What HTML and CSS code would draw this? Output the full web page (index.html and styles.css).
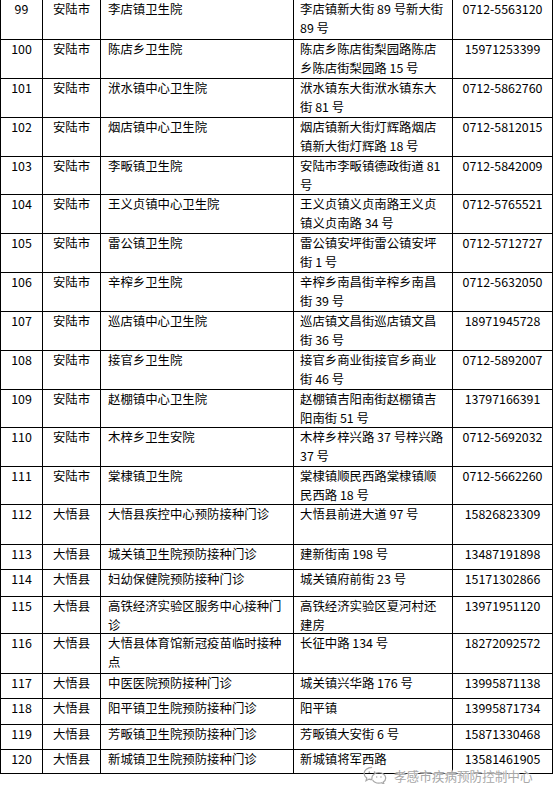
FILE: index.html
```html
<!DOCTYPE html>
<html lang="zh-CN">
<head>
<meta charset="utf-8">
<title>接种点列表</title>
<link rel="stylesheet" href="styles.css">
</head>
<body>
<div class="sheet">
  <div class="row h40"><div class="c num">99</div><div class="c city">安陆市</div><div class="c name">李店镇卫生院</div><div class="c addr">李店镇新大街 89 号新大街<br>89 号</div><div class="c tel">0712-5563120</div></div>
  <div class="row h39"><div class="c num">100</div><div class="c city">安陆市</div><div class="c name">陈店乡卫生院</div><div class="c addr">陈店乡陈店街梨园路陈店<br>乡陈店街梨园路 15 号</div><div class="c tel">15971253399</div></div>
  <div class="row h39"><div class="c num">101</div><div class="c city">安陆市</div><div class="c name">洑水镇中心卫生院</div><div class="c addr">洑水镇东大街洑水镇东大<br>街 81 号</div><div class="c tel">0712-5862760</div></div>
  <div class="row h39"><div class="c num">102</div><div class="c city">安陆市</div><div class="c name">烟店镇中心卫生院</div><div class="c addr">烟店镇新大街灯辉路烟店<br>镇新大街灯辉路 18 号</div><div class="c tel">0712-5812015</div></div>
  <div class="row h38"><div class="c num">103</div><div class="c city">安陆市</div><div class="c name">李畈镇卫生院</div><div class="c addr">安陆市李畈镇德政街道 81<br>号</div><div class="c tel">0712-5842009</div></div>
  <div class="row h39"><div class="c num">104</div><div class="c city">安陆市</div><div class="c name">王义贞镇中心卫生院</div><div class="c addr">王义贞镇义贞南路王义贞<br>镇义贞南路 34 号</div><div class="c tel">0712-5765521</div></div>
  <div class="row h39"><div class="c num">105</div><div class="c city">安陆市</div><div class="c name">雷公镇卫生院</div><div class="c addr">雷公镇安坪街雷公镇安坪<br>街 1 号</div><div class="c tel">0712-5712727</div></div>
  <div class="row h39"><div class="c num">106</div><div class="c city">安陆市</div><div class="c name">辛榨乡卫生院</div><div class="c addr">辛榨乡南昌街辛榨乡南昌<br>街 39 号</div><div class="c tel">0712-5632050</div></div>
  <div class="row h39"><div class="c num">107</div><div class="c city">安陆市</div><div class="c name">巡店镇中心卫生院</div><div class="c addr">巡店镇文昌街巡店镇文昌<br>街 36 号</div><div class="c tel">18971945728</div></div>
  <div class="row h39"><div class="c num">108</div><div class="c city">安陆市</div><div class="c name">接官乡卫生院</div><div class="c addr">接官乡商业街接官乡商业<br>街 46 号</div><div class="c tel">0712-5892007</div></div>
  <div class="row h38"><div class="c num">109</div><div class="c city">安陆市</div><div class="c name">赵棚镇中心卫生院</div><div class="c addr">赵棚镇吉阳南街赵棚镇吉<br>阳南街 51 号</div><div class="c tel">13797166391</div></div>
  <div class="row h39"><div class="c num">110</div><div class="c city">安陆市</div><div class="c name">木梓乡卫生安院</div><div class="c addr">木梓乡梓兴路 37 号梓兴路<br>37 号</div><div class="c tel">0712-5692032</div></div>
  <div class="row h38"><div class="c num">111</div><div class="c city">安陆市</div><div class="c name">棠棣镇卫生院</div><div class="c addr">棠棣镇顺民西路棠棣镇顺<br>民西路 18 号</div><div class="c tel">0712-5662260</div></div>
  <div class="row h40"><div class="c num">112</div><div class="c city">大悟县</div><div class="c name">大悟县疾控中心预防接种门诊</div><div class="c addr">大悟县前进大道 97 号</div><div class="c tel">15826823309</div></div>
  <div class="row h25"><div class="c num">113</div><div class="c city">大悟县</div><div class="c name">城关镇卫生院预防接种门诊</div><div class="c addr">建新街南 198 号</div><div class="c tel">13487191898</div></div>
  <div class="row h27"><div class="c num">114</div><div class="c city">大悟县</div><div class="c name">妇幼保健院预防接种门诊</div><div class="c addr">城关镇府前街 23 号</div><div class="c tel">15171302866</div></div>
  <div class="row h37"><div class="c num">115</div><div class="c city">大悟县</div><div class="c name">高铁经济实验区服务中心接种门<br>诊</div><div class="c addr">高铁经济实验区夏河村还<br>建房</div><div class="c tel">13971951120</div></div>
  <div class="row h40"><div class="c num">116</div><div class="c city">大悟县</div><div class="c name">大悟县体育馆新冠疫苗临时接种<br>点</div><div class="c addr">长征中路 134 号</div><div class="c tel">18272092572</div></div>
  <div class="row h25"><div class="c num">117</div><div class="c city">大悟县</div><div class="c name">中医医院预防接种门诊</div><div class="c addr">城关镇兴华路 176 号</div><div class="c tel">13995871138</div></div>
  <div class="row h26"><div class="c num">118</div><div class="c city">大悟县</div><div class="c name">阳平镇卫生院预防接种门诊</div><div class="c addr">阳平镇</div><div class="c tel">13995871734</div></div>
  <div class="row h25"><div class="c num">119</div><div class="c city">大悟县</div><div class="c name">芳畈镇卫生院预防接种门诊</div><div class="c addr">芳畈镇大安街 6 号</div><div class="c tel">15871330468</div></div>
  <div class="row h24 tight"><div class="c num">120</div><div class="c city">大悟县</div><div class="c name">新城镇卫生院预防接种门诊</div><div class="c addr">新城镇将军西路</div><div class="c tel">13581461905</div></div>
</div>
<div class="watermark">
  <svg class="wm-icon" width="26" height="18" viewBox="0 0 26 19" aria-hidden="true">
    <path d="M10 1.5C5 1.5 1.5 4.5 1.5 8c0 2 1.1 3.6 2.8 4.8L3.5 15.5l3.2-1.7c1 .3 2.1.5 3.3.5" fill="none" stroke="#a8a8a8" stroke-width="1.3"/>
    <path d="M10 14.3c-.2-.5-.3-1-.3-1.6 0-3.2 3.2-5.7 7.3-5.7s7.3 2.5 7.3 5.7c0 1.8-1 3.3-2.5 4.300l.6 2-2.4-1.3c-.9.3-2 .4-3 .4-2.9 0-5.4-1.3-6.5-3.3" fill="none" stroke="#a8a8a8" stroke-width="1.3"/>
    <circle cx="7" cy="6.5" r=".9" fill="#a8a8a8"/>
    <circle cx="12.5" cy="6.5" r=".9" fill="#a8a8a8"/>
    <circle cx="14.8" cy="11.5" r=".8" fill="#a8a8a8"/>
    <circle cx="19.3" cy="11.5" r=".8" fill="#a8a8a8"/>
  </svg>
  <span class="wm-text">孝感市疾病预防控制中心</span>
</div>
</body>
</html>
```

FILE: styles.css
```css
html, body {
  margin: 0;
  padding: 0;
  background: #fff;
}

body {
  position: relative;
  width: 554px;
  height: 798px;
  overflow: hidden;
  font-family: "Noto Sans CJK SC", "Noto Sans", sans-serif;
  font-size: 12.4px;
  line-height: 19px;
  color: #000;
}

.sheet {
  width: 552px;
  border-left: 1px solid #000;
}

.row {
  display: grid;
  grid-template-columns: 42px 58px 193px 159px 100px;
}

.h40 { height: 40px; }
.h39 { height: 39px; }
.h38 { height: 38px; }
.h37 { height: 37px; }
.h27 { height: 27px; }
.h26 { height: 26px; }
.h25 { height: 25px; }
.h24 { height: 24px; }

.c {
  box-sizing: border-box;
  border-right: 1px solid #000;
  border-bottom: 1px solid #000;
  white-space: nowrap;
  overflow: hidden;
}

.tight .c {
  line-height: 15px;
  padding-top: 2px;
}

.num, .city, .tel {
  text-align: center;
}

.name {
  padding-left: 7px;
}

.addr {
  padding-left: 6px;
}

.watermark {
  position: absolute;
  left: 362px;
  top: 766px;
  display: flex;
  align-items: center;
  gap: 6px;
}

.wm-icon {
  display: block;
}

.wm-text {
  font-size: 12.6px;
  line-height: 13px;
  color: #a8a8a8;
  text-shadow: 0 0 2px #fff, 0 0 2px #fff, 0 0 1px #fff;
}
```
